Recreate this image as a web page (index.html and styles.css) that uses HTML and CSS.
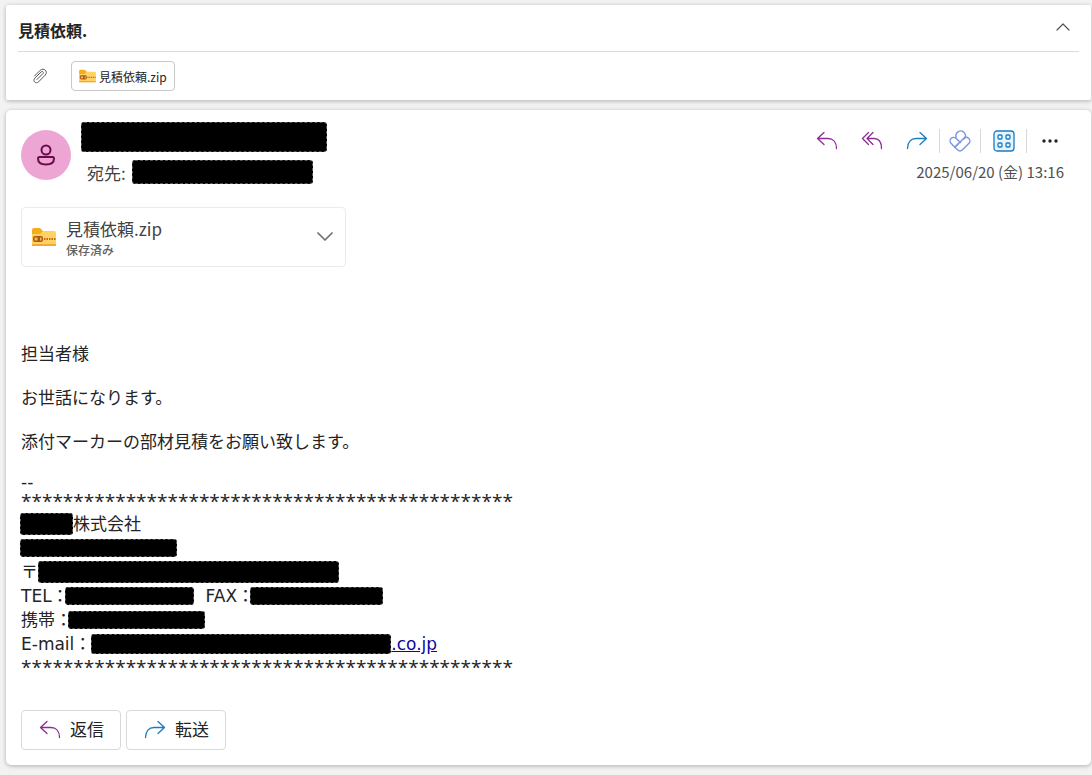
FILE: index.html
```html
<!DOCTYPE html>
<html lang="ja">

<head>
    <meta charset="UTF-8">
    <meta name="viewport" content="width=device-width, initial-scale=1.0">
    <title>見積依頼.</title>
    <link rel="stylesheet" href="styles.css">
</head>

<body>
    <!-- Shared icons -->
    <svg class="sprite" aria-hidden="true">
        <symbol id="icon-reply" viewBox="0 0 22 20">
            <path d="M8 1.500 1.500 7.500 8 13.500M1.500 7.500H12C17 7.500 20.500 11 20.500 17.500" />
        </symbol>
        <symbol id="icon-forward" viewBox="0 0 22 20">
            <path d="M14 1.500 20.500 7.500 14 13.500M20.500 7.500H10C5 7.500 1.500 11 1.500 17.500" />
        </symbol>
        <symbol id="icon-zip" viewBox="0 0 24 20">
            <path fill="#f3ae1c" d="M0 3a2 2 0 0 1 2-2h6l3 3v5H0z" />
            <path fill="#ffd263" d="M0 7h8l3-3h11a2 2 0 0 1 2 2v12a1 1 0 0 1-1 1H1a1 1 0 0 1-1-1z" />
            <path fill="#efab32" d="M0 17h24v1a1 1 0 0 1-1 1H1a1 1 0 0 1-1-1z" />
            <rect x="1" y="9" width="10" height="6" rx="2" fill="#ad5815" />
            <rect x="2.500" y="10.500" width="3" height="3" fill="#f3ba55" />
            <rect x="8" y="10.500" width="1.500" height="3" fill="#f3ba55" />
            <path stroke="#bd681b" stroke-width="2" stroke-dasharray="1.500 1" d="M12 12h12" />
        </symbol>
    </svg>

    <!-- Subject -->
    <header class="card subject-card">
        <div class="subject-row">
            <h1>見積依頼.</h1>
            <button class="collapse" type="button" aria-label="折りたたむ">
                <svg width="14" height="8" viewBox="0 0 14 8"><path d="M1 7l6-6 6 6" /></svg>
            </button>
        </div>
        <div class="files-row">
            <svg class="clip" width="14" height="16" viewBox="0 0 14 16">
                <path d="M4 11.500 9.800 5.700c1.500-1.600-.3-3.100-1.800-1.700L1.800 10.200c-2.500 2.900 1 6.200 3.800 3.600l6.600-6.700c3.300-3.700-1.500-8-5-4.800L1.500 8" />
            </svg>
            <button class="chip" type="button">
                <svg width="17" height="14"><use href="#icon-zip" /></svg>
                見積依頼.zip
            </button>
        </div>
    </header>

    <!-- Message -->
    <main class="card message">
        <div class="message-head">
            <div class="avatar">
                <svg width="20" height="22" viewBox="0 0 20 22">
                    <circle cx="10" cy="6" r="4.500" />
                    <path d="M3.500 13h13a1.500 1.500 0 0 1 1.500 1.500C18 18.500 14.500 20.500 10 20.500S2 18.500 2 14.500A1.500 1.500 0 0 1 3.500 13z" />
                </svg>
            </div>
            <div class="people">
                <span class="mask mask-sender"></span>
                <div class="to">宛先: <span class="mask mask-to"></span></div>
            </div>
            <div class="head-right">
                <div class="toolbar">
                    <button class="tool purple" type="button" aria-label="返信">
                        <svg width="22" height="20"><use href="#icon-reply" /></svg>
                    </button>
                    <button class="tool purple" type="button" aria-label="全員に返信">
                        <svg width="22" height="20" viewBox="0 0 22 20">
                            <path d="M7.500 1.500 1.500 7.500l6 6M12 1.500l-6 6 6 6M6 7.500h7c5 0 7.500 4 7.500 10" />
                        </svg>
                    </button>
                    <button class="tool blue" type="button" aria-label="転送">
                        <svg width="22" height="20"><use href="#icon-forward" /></svg>
                    </button>
                    <span class="sep"></span>
                    <button class="tool tool-narrow loop" type="button" aria-label="Loop">
                        <svg width="22" height="22" viewBox="0 0 22 22">
                            <path d="M7.200 7.200A4.700 4.700 0 1 1 15 9" />
                            <path d="M9.500 13.500 5.800 17.200 2.200 13.600a3.600 3.600 0 0 1 5-5.200l4.300 4.200" />
                            <path d="M5.800 17.200 14.600 8.400a3.600 3.600 0 0 1 5.200 5.200l-6.300 6.200a3.600 3.600 0 0 1-5 0z" />
                        </svg>
                    </button>
                    <span class="sep"></span>
                    <button class="tool blue" type="button" aria-label="アプリ">
                        <svg width="22" height="22" viewBox="0 0 22 22">
                            <rect class="tint" x="1" y="1" width="20" height="20" rx="3" />
                            <rect x="5" y="5" width="4" height="4" rx="1" />
                            <rect x="13" y="5" width="4" height="4" rx="1" />
                            <rect x="5" y="13" width="4" height="4" rx="1" />
                            <rect x="13" y="13" width="4" height="4" rx="1" />
                        </svg>
                    </button>
                    <span class="sep"></span>
                    <button class="tool more" type="button" aria-label="その他">
                        <svg width="18" height="4" viewBox="0 0 18 4">
                            <circle cx="3" cy="2" r="1.700" /><circle cx="9" cy="2" r="1.700" /><circle cx="15" cy="2" r="1.700" />
                        </svg>
                    </button>
                </div>
                <time datetime="2025-06-20T13:16">2025/06/20 (金) 13:16</time>
            </div>
        </div>

        <button class="attachment" type="button">
            <svg width="24" height="20"><use href="#icon-zip" /></svg>
            <span class="file-info">
                <span class="file-name">見積依頼.zip</span>
                <span class="file-state">保存済み</span>
            </span>
            <svg class="arrow" width="16" height="10" viewBox="0 0 16 10"><path d="M1 1l7 7 7-7" /></svg>
        </button>

        <div class="content">
            <p>担当者様</p>
            <p>お世話になります。</p>
            <p>添付マーカーの部材見積をお願い致します。</p>
            <div class="dashes">--</div>
            <div class="stars">***********************************************</div>
            <div class="line"><span class="mask mask-company"></span>株式会社</div>
            <div class="line"><span class="mask mask-dept"></span></div>
            <div class="line">〒<span class="mask mask-address"></span></div>
            <div class="line">TEL：<span class="mask mask-tel"></span><span class="fax">FAX：</span><span class="mask mask-fax"></span></div>
            <div class="line">携帯：<span class="mask mask-mobile"></span></div>
            <div class="line">E-mail：<a href="#"><span class="mask mask-mail"></span>.co.jp</a></div>
            <div class="stars">***********************************************</div>
        </div>

        <div class="actions">
            <button class="purple" type="button"><svg width="22" height="20"><use href="#icon-reply" /></svg><span>返信</span></button>
            <button class="blue" type="button"><svg width="22" height="20"><use href="#icon-forward" /></svg><span>転送</span></button>
        </div>
    </main>
</body>

</html>
```
FILE: styles.css
```css
* {
    box-sizing: border-box;
}

body {
    margin: 0;
    padding: 5px 1px 10px 6px;
    background-color: #f2f2f2;
    color: #242424;
    font-family: "Noto Sans CJK JP", sans-serif;
}

button {
    display: flex;
    align-items: center;
    margin: 0;
    padding: 0;
    border: none;
    background: none;
    color: inherit;
    font-family: inherit;
    cursor: pointer;
}

svg {
    flex: none;
    fill: none;
    stroke-linecap: round;
    stroke-linejoin: round;
}

.sprite {
    display: none;
}

#icon-zip {
    stroke-linecap: butt;
}

.card {
    background-color: #fff;
    box-shadow: 0 1px 4px rgba(0, 0, 0, 0.28);
}

/* Subject */
.subject-card {
    margin-bottom: 10px;
    padding: 0 12px;
    border-radius: 2px;
}

.subject-row {
    display: flex;
    align-items: center;
    justify-content: space-between;
    height: 47px;
    padding: 0 9px 3px 0;
    border-bottom: 1px solid #dcdcdc;
}

.subject-row h1 {
    margin: 6px 0 0;
    font-size: 16px;
    line-height: 24px;
}

.collapse svg {
    stroke: #555;
    stroke-width: 1.2;
}

.files-row {
    display: flex;
    align-items: center;
    gap: 24px;
    height: 48px;
    padding-left: 15px;
}

.clip {
    stroke: #555;
    stroke-width: 1;
}

.chip {
    gap: 3px;
    height: 30px;
    padding: 0 7px;
    border: 1px solid #c8c8c8;
    border-radius: 4px;
    font-size: 12px;
}

/* Message header */
.message {
    padding: 12px 15px 15px;
    border-radius: 5px;
}

.message-head {
    display: flex;
    gap: 10px;
}

.avatar {
    display: flex;
    align-items: center;
    justify-content: center;
    width: 50px;
    height: 50px;
    margin-top: 8px;
    border-radius: 50%;
    background-color: #eda6d3;
}

.avatar svg {
    stroke: #6b0b49;
    stroke-width: 2;
}

.people {
    display: flex;
    flex-direction: column;
    gap: 8px;
}

.to {
    display: flex;
    align-items: center;
    gap: 6px;
    height: 24px;
    padding-left: 6px;
    color: #424242;
    font-size: 17px;
}

.head-right {
    margin-left: auto;
    padding-right: 4px;
    color: #505050;
    font-size: 15px;
    text-align: right;
}

.head-right time {
    display: block;
    padding-right: 8px;
    line-height: 26px;
}

.toolbar {
    display: flex;
    align-items: center;
    height: 37px;
}

.tool {
    justify-content: center;
    width: 45px;
    height: 36px;
}

.tool-narrow {
    width: 40px;
}

.sep {
    width: 1px;
    height: 24px;
    background-color: #d8d8d8;
}

.purple svg {
    stroke: #8a2e94;
    stroke-width: 1.3;
}

.blue svg {
    stroke: #1c7cc0;
    stroke-width: 1.3;
}

.loop svg {
    stroke: #7796e0;
    stroke-width: 1.4;
}

.tint {
    fill: #e5f4fd;
}

.more svg {
    fill: #242424;
}

/* Attachment */
.attachment {
    width: 325px;
    max-width: 100%;
    height: 60px;
    margin-top: 22px;
    padding: 0 12px 0 10px;
    border: 1px solid #ebebeb;
    border-radius: 4px;
    text-align: left;
}

.file-info {
    flex: 1;
    padding: 2px 0 0 10px;
}

.file-name {
    display: block;
    color: #424242;
    font-size: 17px;
    line-height: 24px;
}

.file-state {
    display: block;
    color: #616161;
    font-size: 12px;
    font-weight: 500;
    line-height: 18px;
}

.arrow {
    stroke: #707070;
    stroke-width: 1.7;
}

/* Mail text */
.content {
    margin-top: 75px;
    font-family: "DejaVu Sans", "Noto Sans CJK JP", sans-serif;
    font-size: 17px;
    line-height: 24px;
}

.content p {
    margin: 0 0 20px;
}

.content a {
    display: flex;
    align-items: center;
    color: #0a0aa0;
    text-decoration: underline;
}

.dashes {
    line-height: 16px;
}

.stars {
    font-family: "Open Sans", sans-serif;
    font-size: 19px;
    line-height: 22px;
}

.line {
    display: flex;
    align-items: center;
    height: 24px;
}

.fax {
    padding-left: 12px;
}

/* Blacked out parts */
.mask {
    height: 18px;
    border: 1px dashed #555;
    border-radius: 3px;
    background-color: #000;
}

.mask-sender {
    width: 246px;
    height: 30px;
}

.mask-to {
    width: 181px;
    height: 24px;
}

.mask-company,
.mask-dept {
    margin-left: -1px;
}

.mask-company {
    width: 53px;
    height: 22px;
}

.mask-dept {
    width: 157px;
}

.mask-address {
    width: 301px;
    height: 22px;
}

.mask-tel,
.mask-fax,
.mask-mobile {
    margin-left: -4px;
}

.mask-tel {
    width: 129px;
}

.mask-fax {
    width: 133px;
}

.mask-mobile {
    width: 137px;
}

.mask-mail {
    width: 300px;
    height: 20px;
}

/* Bottom buttons */
.actions {
    display: flex;
    gap: 5px;
    margin-top: 32px;
}

.actions button {
    gap: 9px;
    height: 40px;
    padding: 0 16px 0 17px;
    border: 1px solid #d9d9d9;
    border-radius: 4px;
    font-size: 17px;
}

.actions span {
    line-height: 22px;
    padding-bottom: 2px;
}
```
